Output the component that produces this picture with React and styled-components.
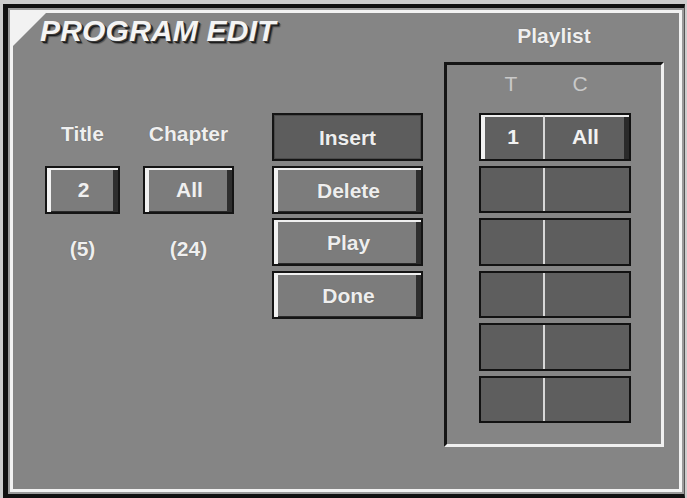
import styled, { createGlobalStyle, css } from "styled-components";

const Global = createGlobalStyle`
  html, body {
    margin: 0;
    padding: 0;
    background: #cdcdcd;
  }
  body {
    font-family: "Liberation Sans", Arial, sans-serif;
  }
`;

const Frame = styled.div`
  display: inline-block;
  margin: 4px 0 0 3px;
  padding: 2px;
  background: #9a9a9a;
  border-top: 4px solid #111;
  border-left: 5px solid #111;
  border-bottom: 4px solid #111;
  border-right: 1px solid #555;
`;

const Screen = styled.div`
  position: relative;
  box-sizing: border-box;
  width: 672px;
  height: 482px;
  border: 3px solid #f2f2f2;
  background: #858585;
  display: flex;
  overflow: hidden;

  &::before {
    content: "";
    position: absolute;
    left: 0;
    top: 0;
    width: 33px;
    height: 33px;
    background: #f2f2f2;
    clip-path: polygon(0 0, 100% 0, 0 100%);
  }
`;

const LeftPane = styled.div`
  width: 431px;
  display: flex;
  flex-direction: column;
`;

const Heading = styled.h1`
  margin: 1px 0 0 27px;
  font-size: 30px;
  line-height: 34px;
  font-weight: bold;
  font-style: italic;
  color: #f4f4f4;
  text-shadow: 1px 1px 0 #3a3a3a, 2px 2px 0 #1c1c1c, 3px 3px 1px rgba(0, 0, 0, 0.4);
  letter-spacing: 0.2px;
`;

const Body = styled.div`
  display: flex;
  align-items: flex-start;
  margin-top: 65px;
`;

const Selectors = styled.div`
  display: flex;
  gap: 23px;
  margin: 9px 0 0 32px;
`;

const Selector = styled.div`
  width: ${({ $w }) => $w}px;
  display: flex;
  flex-direction: column;
  align-items: center;
`;

const Label = styled.div`
  font-size: 21px;
  line-height: 24px;
  font-weight: bold;
  color: #efefef;
  text-shadow: 0 0 1px rgba(0, 0, 0, 0.35);
`;

const raised = css`
  border: 2px solid #141414;
  background: #7c7c7c;
  box-shadow: inset 0 2px 0 #efefef, inset 4px 0 0 #f2f2f2,
    inset -5px 0 0 #2e2e2e, inset 0 -1px 0 #2a2a2a;
`;

const ValueBox = styled.div`
  box-sizing: border-box;
  width: 100%;
  height: 48px;
  margin-top: 20px;
  ${raised}
  display: flex;
  align-items: center;
  justify-content: center;
  padding-left: 2px;
  font-size: 21px;
  font-weight: bold;
  color: #f0f0f0;
`;

const Count = styled(Label)`
  margin-top: 23px;
`;

const Buttons = styled.div`
  display: flex;
  flex-direction: column;
  gap: 4.5px;
  margin-left: 38px;
  width: 151px;
`;

const Button = styled.div`
  box-sizing: border-box;
  height: 48px;
  display: flex;
  align-items: center;
  justify-content: center;
  padding-top: 2px;
  font-size: 21px;
  font-weight: bold;
  color: #eeeeee;
  text-shadow: 0 0 1px rgba(0, 0, 0, 0.3);
  ${({ $active }) =>
    $active
      ? css`
          border: 2px solid #141414;
          background: #5d5d5d;
          box-shadow: inset 0 0 0 1px #4a4a4a;
        `
      : css`
          ${raised}
          padding-left: 2px;
        `}
`;

const RightPane = styled.div`
  width: 220px;
  display: flex;
  flex-direction: column;
`;

const PlaylistTitle = styled(Label)`
  margin-top: 11px;
  text-align: center;
`;

const PlaylistBox = styled.div`
  box-sizing: border-box;
  height: 385px;
  margin-top: 14px;
  border-style: solid;
  border-width: 3px;
  border-color: #151515 #f0f0f0 #f0f0f0 #151515;
  padding: 7px 0 0 32px;
`;

const ColHeads = styled.div`
  display: flex;
  width: 152px;
  font-size: 21px;
  line-height: 24px;
  color: #c9c9c9;
`;

const ColHead = styled.div`
  width: ${({ $w }) => $w}px;
  text-align: center;
`;

const Rows = styled.div`
  display: flex;
  flex-direction: column;
  gap: 5px;
  margin-top: 17px;
`;

const Row = styled.div`
  box-sizing: border-box;
  width: 152px;
  height: 47.5px;
  display: flex;
  border: 2px solid #121212;
  background: #5e5e5e;
  font-size: 21px;
  font-weight: bold;
  color: #f2f2f2;
  ${({ $selected }) =>
    $selected &&
    css`
      background: #606060;
      box-shadow: inset 0 2px 0 #eeeeee, inset 4px 0 0 #f2f2f2,
        inset -5px 0 0 #2a2a2a;
    `}
`;

const Cell = styled.div`
  display: flex;
  align-items: center;
  justify-content: center;
  ${({ $first }) =>
    $first
      ? css`
          width: 60px;
          border-right: 2px solid #d8d8d8;
          padding-left: 2px;
        `
      : css`
          flex: 1;
          padding-right: 3px;
        `}
`;

const playlist = [
  { t: "1", c: "All" },
  { t: "", c: "" },
  { t: "", c: "" },
  { t: "", c: "" },
  { t: "", c: "" },
  { t: "", c: "" },
];

export default function App() {
  return (
    <>
      <Global />
      <Frame>
        <Screen>
          <LeftPane>
            <Heading>PROGRAM EDIT</Heading>
            <Body>
              <Selectors>
                <Selector $w={75}>
                  <Label>Title</Label>
                  <ValueBox>2</ValueBox>
                  <Count>(5)</Count>
                </Selector>
                <Selector $w={91}>
                  <Label>Chapter</Label>
                  <ValueBox>All</ValueBox>
                  <Count>(24)</Count>
                </Selector>
              </Selectors>
              <Buttons>
                <Button $active>Insert</Button>
                <Button>Delete</Button>
                <Button>Play</Button>
                <Button>Done</Button>
              </Buttons>
            </Body>
          </LeftPane>
          <RightPane>
            <PlaylistTitle>Playlist</PlaylistTitle>
            <PlaylistBox>
              <ColHeads>
                <ColHead $w={64}>T</ColHead>
                <ColHead $w={74}>C</ColHead>
              </ColHeads>
              <Rows>
                {playlist.map((item, i) => (
                  <Row key={i} $selected={i === 0}>
                    <Cell $first>{item.t}</Cell>
                    <Cell>{item.c}</Cell>
                  </Row>
                ))}
              </Rows>
            </PlaylistBox>
          </RightPane>
        </Screen>
      </Frame>
    </>
  );
}
